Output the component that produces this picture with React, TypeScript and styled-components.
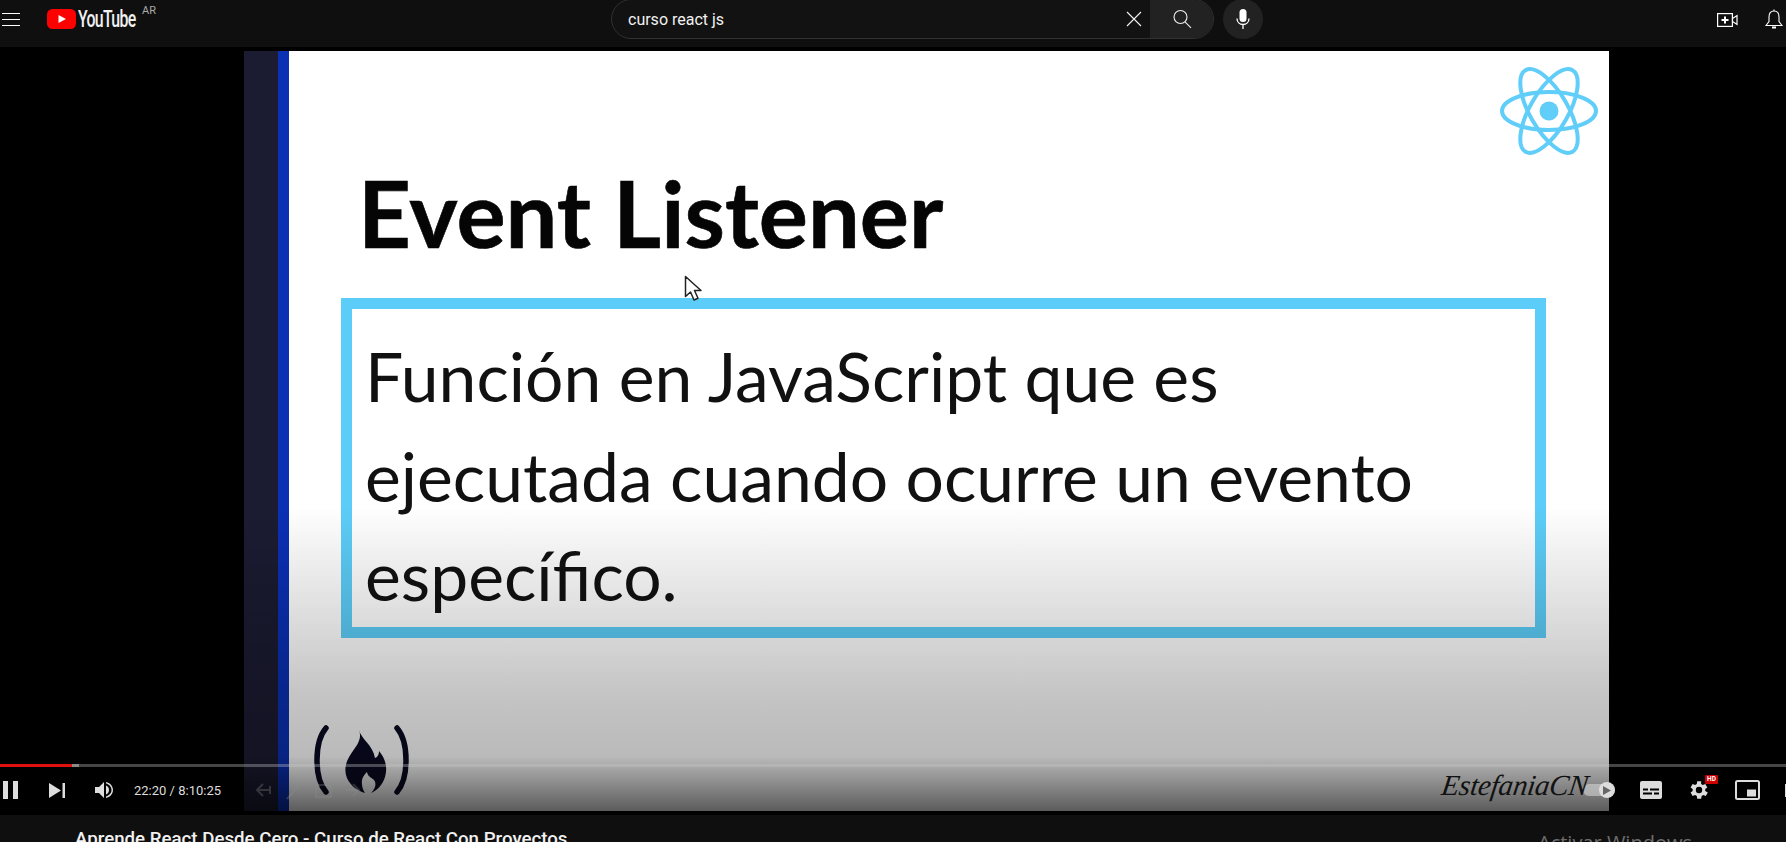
import React from "react";
import styled, { createGlobalStyle } from "styled-components";

const GlobalStyle = createGlobalStyle`
  html, body {
    margin: 0;
    padding: 0;
    height: 842px;
    overflow: hidden;
    background: #0f0f0f;
    font-family: Roboto, "Liberation Sans", sans-serif;
  }
`;

const App = () => {
  return (
    <Page>
      <GlobalStyle />
      <Header>
        <HeaderLeft>
          <MenuButton>
            <span />
            <span />
            <span />
          </MenuButton>
          <Logo>
            <svg width="29" height="20" viewBox="0 0 29 20">
              <rect width="29" height="20" rx="5.5" fill="#f00" />
              <path d="M11.5 6L19 10l-7.5 4z" fill="#fff" />
            </svg>
            <LogoWord>YouTube</LogoWord>
            <Country>AR</Country>
          </Logo>
        </HeaderLeft>
        <SearchArea>
          <SearchBox>
            <SearchText>curso react js</SearchText>
            <ClearButton>
              <svg width="16" height="16" viewBox="0 0 16 16" stroke="#f1f1f1" strokeWidth="1.1">
                <path d="M1 1l14 14M15 1L1 15" />
              </svg>
            </ClearButton>
            <SearchButton>
              <svg width="20" height="20" viewBox="0 0 20 20" fill="none" stroke="#f1f1f1" strokeWidth="1.1">
                <circle cx="8.5" cy="8" r="6.5" />
                <path d="M13 12.8l6 6" />
              </svg>
            </SearchButton>
          </SearchBox>
          <MicButton>
            <svg width="16" height="22" viewBox="0 0 16 22">
              <rect x="4.5" y="1" width="7" height="13" rx="3.5" fill="#fff" />
              <path d="M2 10.5c0 3.6 2.6 6 6 6s6-2.4 6-6M8 16.5V21" fill="none" stroke="#fff" strokeWidth="1.3" />
            </svg>
          </MicButton>
        </SearchArea>
        <HeaderRight>
          <svg width="21" height="14" viewBox="0 0 21 14">
            <rect x="0.6" y="0.6" width="14.8" height="12.8" fill="none" stroke="#fff" strokeWidth="1.2" />
            <path d="M7 3.5h2v2.5h2.5v2H9v2.500H7V8H4.500V6H7z" fill="#fff" />
            <path d="M15.500 5.500L20 2.500v9l-4.500-3z" fill="none" stroke="#fff" strokeWidth="1.2" />
          </svg>
          <svg width="18" height="21" viewBox="0 0 18 21" fill="none" stroke="#fff" strokeWidth="1.1">
            <path d="M9 2C5.500 2 4 4.500 4 8v4.500L1 16.500h16L14 12.500V8c0-3.500-1.500-6-5-6z" />
            <path d="M7 18.500h4" strokeWidth="2" />
            <path d="M9 0.500v1.500" />
          </svg>
        </HeaderRight>
      </Header>

      <Player>
        <Slide>
          <DarkStripe />
          <BlueStripe />
          <SlideBody>
            <TitleRow>
              <SlideTitle>Event Listener</SlideTitle>
              <ReactLogo viewBox="-50 -45 100 90" fill="none" stroke="#61cdf9" strokeWidth="4">
                <ellipse rx="47" ry="19" />
                <ellipse rx="47" ry="19" transform="rotate(60)" />
                <ellipse rx="47" ry="19" transform="rotate(120)" />
                <circle r="9.5" fill="#61cdf9" stroke="none" />
              </ReactLogo>
            </TitleRow>
            <DefinitionBox>
              <DefinitionText>
                Función en JavaScript que es
                <br />
                ejecutada cuando ocurre un evento
                <br />
                específico.
              </DefinitionText>
            </DefinitionBox>
            <SlideFooter>
              <FireLogo viewBox="0 0 97 70">
                <path d="M13 3C1 17 1 53 13 67" fill="none" stroke="#0a0a23" strokeWidth="5.5" strokeLinecap="round" />
                <path d="M84 3C96 17 96 53 84 67" fill="none" stroke="#0a0a23" strokeWidth="5.5" strokeLinecap="round" />
                <path
                  d="M46 5c2 9 14 15 16 28 3-1 4-4 4-7 6 7 9 16 6 26-2 7-7 13-14 16 4-4 6-9 3-13-3-3-6-3-7-8-3 3-6 7-5 12 0 3 1 6 3 9-8-2-17-9-19-18-3-13 6-22 11-30 3-5 4-10 2-15z"
                  fill="#0a0a23"
                />
              </FireLogo>
              <Signature>EstefaniaCN</Signature>
            </SlideFooter>
          </SlideBody>
        </Slide>

        <ControlsShade />

        <Pointer width="18" height="27" viewBox="0 0 18 27">
          <path d="M1.500 1.500v20l5-4.500 3.500 8 4-1.800-3.500-7.700h6.500z" fill="#fff" stroke="#222" strokeWidth="1.500" strokeLinejoin="round" />
        </Pointer>

        <ControlsArea>
          <ProgressTrack>
            <ProgressPlayed />
            <ProgressBuffered />
          </ProgressTrack>
          <ControlsRow>
            <ControlsLeft>
              <svg width="15" height="18" viewBox="0 0 15 18" fill="#ddd">
                <rect width="5" height="18" />
                <rect x="10" width="5" height="18" />
              </svg>
              <NextIcon width="16" height="15" viewBox="0 0 16 15" fill="#ddd">
                <path d="M0 0l12 7.500L0 15z" />
                <rect x="13.500" width="2.500" height="15" />
              </NextIcon>
              <VolumeIcon width="18" height="18" viewBox="0 0 18 18" fill="#ddd">
                <path d="M0 6h4l5-5v16l-5-5H0z" />
                <path d="M11 4.500c2 .8 3 2.500 3 4.500s-1 3.700-3 4.500z" />
                <path d="M11 1c4 .8 7 4 7 8s-3 7.200-7 8v-1.600c3-.8 5.500-3.200 5.500-6.400S14 3.400 11 2.600z" />
              </VolumeIcon>
              <TimeLabel>22:20 / 8:10:25</TimeLabel>
              <Annotations width="106" height="22" viewBox="0 0 106 22" fill="none" stroke="#8d8d8d" strokeWidth="2" opacity="0.3">
                <path d="M16 11H4m5-6l-6 6 6 6M16 7v8" />
                <path d="M33 20L47 4" />
                <rect x="62" y="6" width="15" height="12" />
                <path d="M92 11h12m-5-6l6 6-6 6" />
              </Annotations>
            </ControlsLeft>
            <ControlsRight>
              <Autoplay>
                <AutoplayKnob>
                  <svg width="8" height="9" viewBox="0 0 8 9">
                    <path d="M0 0l8 4.500L0 9z" fill="#666" />
                  </svg>
                </AutoplayKnob>
              </Autoplay>
              <svg width="22" height="18" viewBox="0 0 22 18">
                <rect width="22" height="18" rx="2" fill="#ddd" />
                <path d="M3 8.500h5M10 8.500h9M3 12.500h9M14 12.500h5" stroke="#000" strokeWidth="2" />
              </svg>
              <GearWrap>
                <svg width="24" height="24" viewBox="0 0 24 24" fill="#ddd">
                  <path d="M19.400 13a7.500 7.500 0 000-2l2.100-1.600-2-3.500-2.500 1a7.500 7.500 0 00-1.700-1L15.400 3.200h-4L11 5.900a7.500 7.500 0 00-1.700 1l-2.500-1-2 3.500L6.900 11a7.500 7.500 0 000 2l-2.100 1.600 2 3.500 2.500-1a7.500 7.500 0 001.700 1l.4 2.700h4l.4-2.700a7.500 7.500 0 001.700-1l2.500 1 2-3.500zM13.200 15.200a3.200 3.200 0 110-6.400 3.200 3.200 0 010 6.400z" transform="translate(-1.200 0)" />
                </svg>
                <HdBadge>HD</HdBadge>
              </GearWrap>
              <svg width="25" height="20" viewBox="0 0 25 20" fill="none">
                <rect x="1" y="1" width="23" height="18" rx="1.500" stroke="#ddd" strokeWidth="2" />
                <rect x="12" y="9.500" width="9" height="7" fill="#ddd" />
              </svg>
              <TheaterEdge />
            </ControlsRight>
          </ControlsRow>
        </ControlsArea>
      </Player>

      <BelowPlayer>
        <VideoTitle>Aprende React Desde Cero - Curso de React Con Proyectos</VideoTitle>
        <ActivateNote>Activar Windows</ActivateNote>
      </BelowPlayer>
    </Page>
  );
};

export default App;

const Page = styled.div`
  width: 1786px;
  height: 842px;
  overflow: hidden;
  display: flex;
  flex-direction: column;
  background: #0f0f0f;
`;
const Header = styled.div`
  height: 47px;
  flex-shrink: 0;
  display: flex;
  align-items: flex-start;
  justify-content: space-between;
  background: #0f0f0f;
`;
const HeaderLeft = styled.div`
  width: 611px;
  display: flex;
  align-items: center;
  height: 38px;
  padding-left: 2px;
  box-sizing: border-box;
`;
const MenuButton = styled.div`
  width: 18px;
  display: flex;
  flex-direction: column;
  gap: 5px;
  margin-right: 27px;
  span {
    display: block;
    height: 1px;
    background: #fff;
  }
`;
const Logo = styled.div`
  display: flex;
  align-items: center;
`;
const LogoWord = styled.div`
  font-size: 24px;
  font-weight: 500;
  color: #f1f1f1;
  letter-spacing: -1px;
  width: 62px;
  margin-left: 2px;
  transform: scaleX(0.66);
  transform-origin: left center;
  white-space: nowrap;
`;
const Country = styled.div`
  font-size: 11px;
  color: #aaa;
  align-self: flex-start;
  margin-left: 2px;
  margin-top: -1px;
`;
const SearchArea = styled.div`
  display: flex;
  align-items: flex-start;
  gap: 9px;
  width: 652px;
  margin-right: 523px;
`;
const SearchBox = styled.div`
  width: 604px;
  height: 40px;
  margin-top: -1px;
  box-sizing: border-box;
  border: 1px solid #303030;
  border-radius: 20px;
  display: flex;
  align-items: center;
  background: #121212;
  overflow: hidden;
`;
const SearchText = styled.div`
  flex: 1;
  padding-left: 16px;
  font-size: 16px;
  color: #f1f1f1;
`;
const ClearButton = styled.div`
  display: flex;
  margin-right: 8px;
`;
const SearchButton = styled.div`
  width: 63px;
  height: 100%;
  background: #222;
  display: flex;
  align-items: center;
  justify-content: center;
`;
const MicButton = styled.div`
  width: 40px;
  height: 40px;
  margin-top: -1px;
  border-radius: 50%;
  background: #222;
  display: flex;
  align-items: center;
  justify-content: center;
`;
const HeaderRight = styled.div`
  position: absolute;
  right: 3px;
  top: 9px;
  display: flex;
  align-items: center;
  gap: 27px;
`;
const Player = styled.div`
  position: relative;
  height: 768px;
  flex-shrink: 0;
  background: #000;
  padding: 4px 177px 4px 244px;
  box-sizing: border-box;
  overflow: hidden;
`;
const Slide = styled.div`
  height: 760px;
  display: flex;
  background: #fff;
`;
const DarkStripe = styled.div`
  width: 34px;
  background: #1b1b32;
`;
const BlueStripe = styled.div`
  width: 11px;
  background: #0a30b4;
`;
const SlideBody = styled.div`
  flex: 1;
  display: flex;
  flex-direction: column;
  padding: 15px 10px 0 52px;
  min-width: 0;
`;
const TitleRow = styled.div`
  height: 232px;
  display: flex;
  justify-content: space-between;
  align-items: flex-start;
`;
const SlideTitle = styled.div`
  font-family: Lato, "Liberation Sans", sans-serif;
  font-weight: 700;
  font-size: 92px;
  line-height: 110px;
  color: #050505;
  margin: 92px 0 0 17px;
  white-space: nowrap;
  -webkit-text-stroke: 0.6px #050505;
`;
const ReactLogo = styled.svg`
  width: 100px;
  height: 90px;
`;
const DefinitionBox = styled.div`
  width: 1205px;
  height: 340px;
  box-sizing: border-box;
  border: 11px solid #5ccdf8;
  padding: 17px 13px 0;
`;
const DefinitionText = styled.div`
  font-family: Lato, "Liberation Sans", sans-serif;
  font-size: 67.8px;
  line-height: 99.5px;
  color: #111;
  white-space: nowrap;
`;
const SlideFooter = styled.div`
  flex: 1;
  display: flex;
  justify-content: space-between;
  align-items: flex-start;
  padding: 87px 11px 0 0;
`;
const FireLogo = styled.svg`
  width: 97px;
  height: 70px;
  margin-left: -28px;
`;
const Signature = styled.div`
  font-family: "Liberation Serif", serif;
  font-style: italic;
  font-size: 29px;
  line-height: 36px;
  color: #111;
  margin-top: 42px;
  letter-spacing: -0.2px;
  transform: skewX(-8deg);
  position: relative;
  z-index: 1;
`;
const ControlsShade = styled.div`
  position: absolute;
  left: 0;
  right: 0;
  bottom: 4px;
  height: 305px;
  background: linear-gradient(
    to bottom,
    rgba(0, 0, 0, 0) 0%,
    rgba(0, 0, 0, 0.23) 62%,
    rgba(0, 0, 0, 0.27) 82%,
    rgba(0, 0, 0, 0.64) 100%
  );
`;
const Pointer = styled.svg`
  position: absolute;
  left: 684px;
  top: 228px;
`;
const ControlsArea = styled.div`
  position: absolute;
  left: 0;
  right: 0;
  bottom: 0;
  height: 51px;
  display: flex;
  flex-direction: column;
`;
const ProgressTrack = styled.div`
  height: 3px;
  display: flex;
  background: rgba(200, 200, 200, 0.35);
`;
const ProgressPlayed = styled.div`
  width: 72px;
  background: #e01010;
`;
const ProgressBuffered = styled.div`
  width: 7px;
  background: #8a8a8a;
`;
const ControlsRow = styled.div`
  flex: 1;
  display: flex;
  justify-content: space-between;
  align-items: center;
  padding: 0 0 2px 3px;
`;
const ControlsLeft = styled.div`
  display: flex;
  align-items: center;
`;
const NextIcon = styled.svg`
  margin-left: 31px;
`;
const VolumeIcon = styled.svg`
  margin-left: 30px;
`;
const TimeLabel = styled.div`
  margin-left: 21px;
  font-size: 13px;
  color: #ddd;
  width: 120px;
  white-space: nowrap;
`;
const Annotations = styled.svg`
  margin-left: 0;
`;
const ControlsRight = styled.div`
  display: flex;
  align-items: center;
`;
const Autoplay = styled.div`
  width: 32px;
  height: 12px;
  border-radius: 6px;
  background: rgba(220, 220, 220, 0.55);
  position: relative;
  margin-right: 25px;
`;
const AutoplayKnob = styled.div`
  position: absolute;
  right: 0;
  top: -2px;
  width: 16px;
  height: 16px;
  border-radius: 50%;
  background: #ddd;
  display: flex;
  align-items: center;
  justify-content: center;
`;
const GearWrap = styled.div`
  position: relative;
  display: flex;
  margin: 0 24px 0 25px;
`;
const HdBadge = styled.div`
  position: absolute;
  left: 18px;
  top: -3px;
  width: 13px;
  height: 9px;
  border-radius: 1px;
  background: #c00;
  color: #fff;
  font-size: 6.5px;
  font-weight: 700;
  line-height: 9px;
  text-align: center;
`;
const TheaterEdge = styled.div`
  width: 1px;
  height: 13px;
  margin-left: 25px;
  background: #ddd;
`;
const BelowPlayer = styled.div`
  flex: 1;
  position: relative;
  padding: 12px 0 0 75px;
  overflow: hidden;
`;
const VideoTitle = styled.div`
  font-size: 18.7px;
  font-weight: 500;
  line-height: 24px;
  color: #f1f1f1;
  white-space: nowrap;
`;
const ActivateNote = styled.div`
  position: absolute;
  left: 1538px;
  top: 14px;
  font-family: "Open Sans", sans-serif;
  font-size: 20px;
  color: #6d6d6d;
  white-space: nowrap;
`;
